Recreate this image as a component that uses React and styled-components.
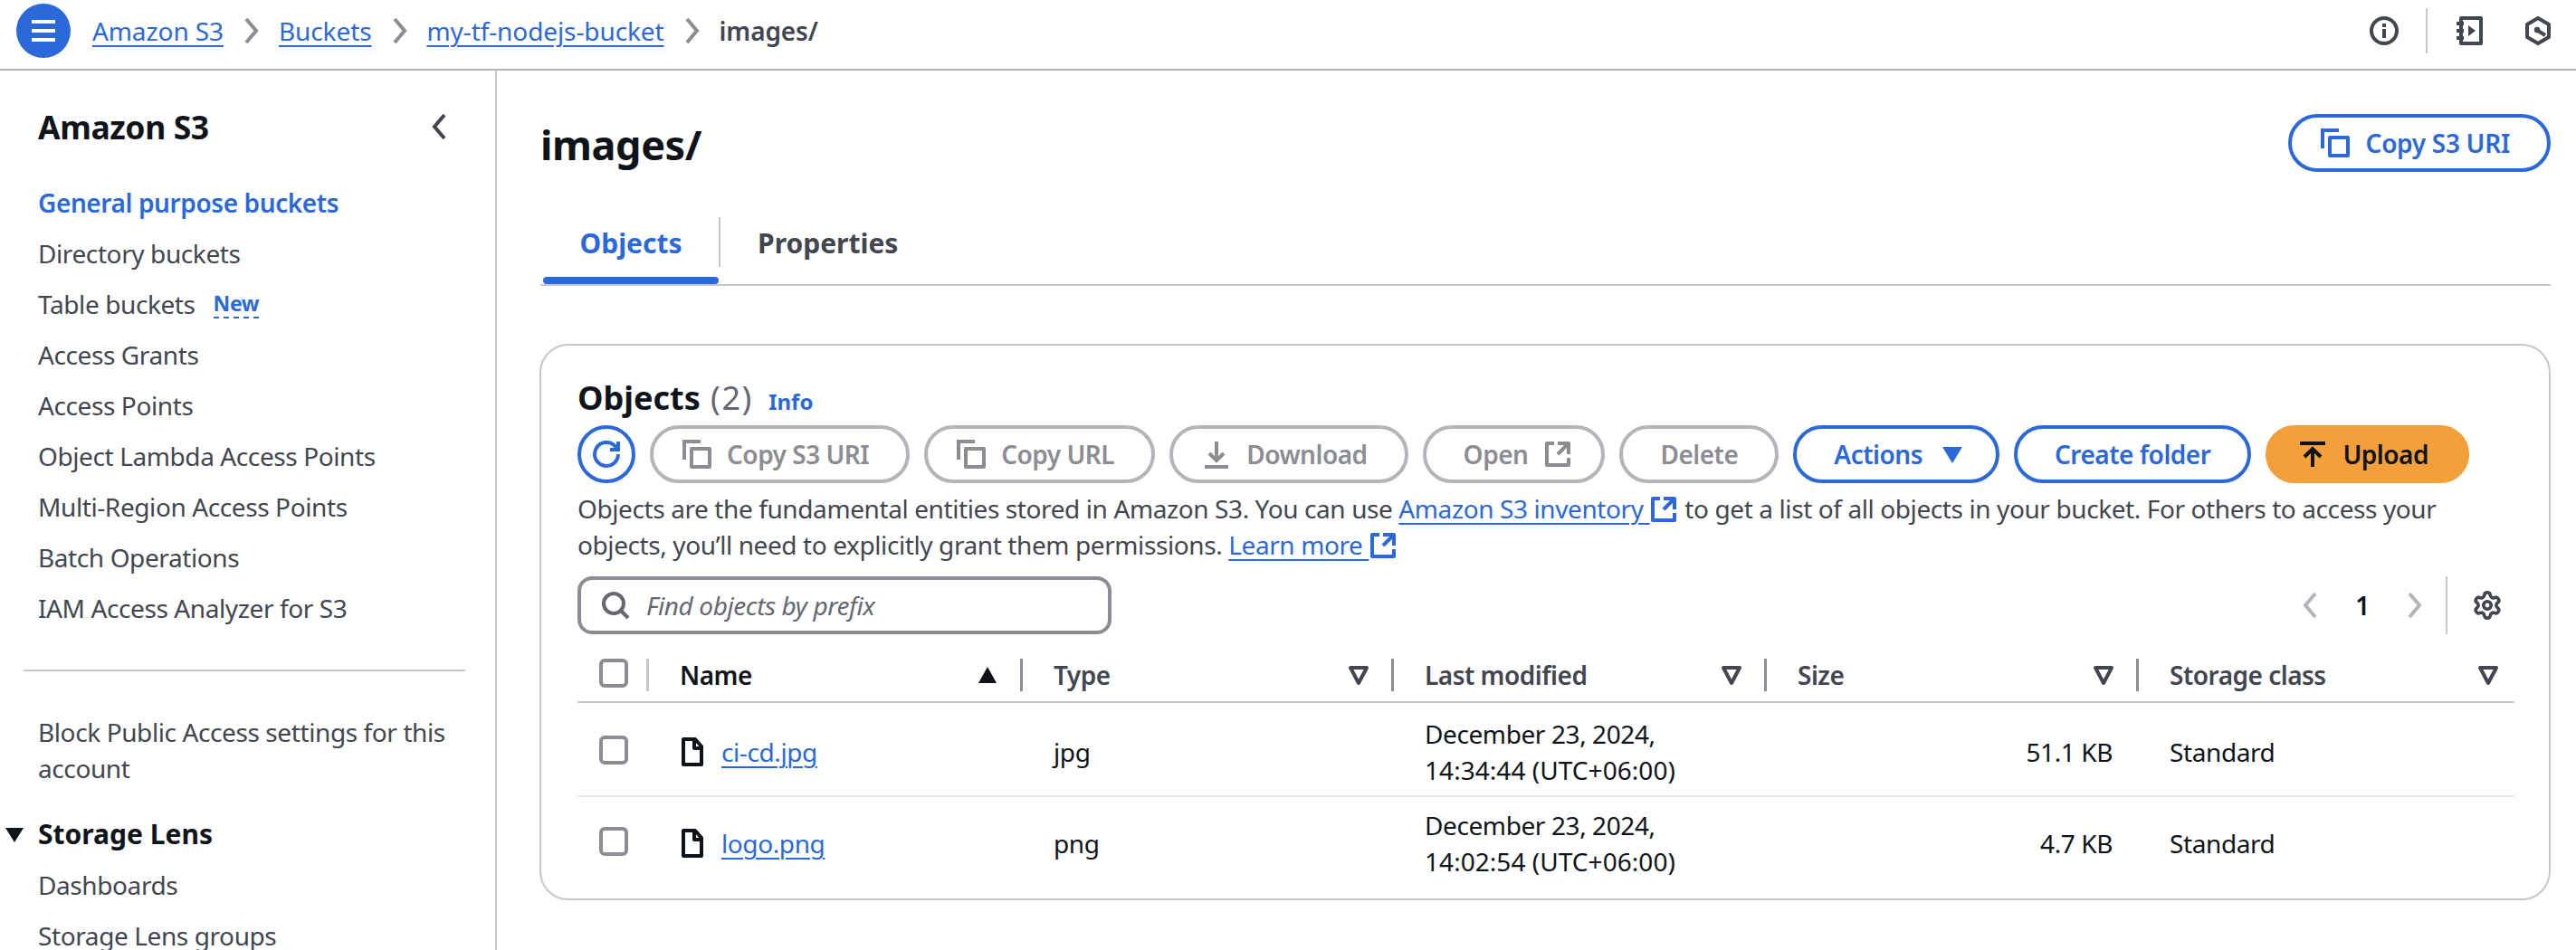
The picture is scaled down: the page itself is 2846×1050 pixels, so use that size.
import styled, { createGlobalStyle } from "styled-components";
import { Settings } from "lucide-react";

const BLUE = "#2b68d9";
const INK = "#0f141a";
const GREY = "#424650";
const LINE = "#c6c6cd";
const MUTED = "#8c8c94";

const navItems = [
  "Directory buckets",
  "Table buckets",
  "Access Grants",
  "Access Points",
  "Object Lambda Access Points",
  "Multi-Region Access Points",
  "Batch Operations",
  "IAM Access Analyzer for S3",
];

const columns = [
  { label: "Name", sorted: true },
  { label: "Type" },
  { label: "Last modified" },
  { label: "Size" },
  { label: "Storage class" },
];

const objects = [
  { name: "ci-cd.jpg", type: "jpg", day: "December 23, 2024,", time: "14:34:44 (UTC+06:00)", size: "51.1 KB" },
  { name: "logo.png", type: "png", day: "December 23, 2024,", time: "14:02:54 (UTC+06:00)", size: "4.7 KB" },
];

function Icon({ size = 32, fill = "none", stroke = "currentColor", width = 2, children }) {
  return (
    <svg width={size} height={size} viewBox="0 0 16 16" fill={fill} stroke={stroke} strokeWidth={width} style={{ flexShrink: 0 }}>
      {children}
    </svg>
  );
}

const CopyIcon = () => (
  <Icon>
    <path d="M1 11V1h9" />
    <path d="M5 5h10v10H5z" strokeLinejoin="round" />
  </Icon>
);

const ExternalIcon = ({ size = 32 }) => (
  <Icon size={size}>
    <path d="M14 8V2H8M14 2 8 8M6 2H2v12h12v-4" strokeLinejoin="round" />
  </Icon>
);

const Chevron = ({ left, size = 32 }) => (
  <Icon size={size}>
    <path d={left ? "M10.5 1.5 5 8l5.5 6.5" : "M5.5 1.5 11 8l-5.5 6.5"} />
  </Icon>
);

const FilterIcon = () => (
  <Icon>
    <path d="M3.5 4h9L8 12.5z" strokeLinejoin="round" />
  </Icon>
);

export default function App() {
  return (
    <Page>
      <GlobalStyle />
      <TopBar>
        <MenuButton>
          <Icon width={2}>
            <path d="M1.5 3h13M1.5 8h13M1.5 13h13" stroke="#fff" />
          </Icon>
        </MenuButton>
        <Crumbs>
          <CrumbLink>Amazon S3</CrumbLink>
          <CrumbSep><Chevron /></CrumbSep>
          <CrumbLink>Buckets</CrumbLink>
          <CrumbSep><Chevron /></CrumbSep>
          <CrumbLink>my-tf-nodejs-bucket</CrumbLink>
          <CrumbSep><Chevron /></CrumbSep>
          <CrumbCurrent>images/</CrumbCurrent>
        </Crumbs>
        <TopTools>
          <Icon>
            <circle cx="8" cy="8" r="7" />
            <path d="M8 7v5M8 4v2" />
          </Icon>
          <ToolDivider />
          <Icon>
            <path d="M3.5 1h11v14h-11z" strokeLinejoin="round" />
            <path d="M1 4h4M1 8h4M1 12h4" />
            <path d="M7.5 5v6l4-3z" fill={GREY} stroke="none" />
          </Icon>
          <HexTool>
            <Icon>
              <path d="M8 1l6 3.5v7L8 15l-6-3.5v-7z" strokeLinejoin="round" />
              <path d="M8 8l4 2.5" />
              <circle cx="7.5" cy="7.5" r="1.6" fill={GREY} stroke="none" />
            </Icon>
          </HexTool>
        </TopTools>
      </TopBar>
      <Body>
        <SideNav>
          <SideHead>
            <SideTitle>Amazon S3</SideTitle>
            <Chevron left />
          </SideHead>
          <NavList>
            <NavItem $active>General purpose buckets</NavItem>
            {navItems.map((item) => (
              <NavItem key={item}>
                {item}
                {item === "Table buckets" && <NewTag>New</NewTag>}
              </NavItem>
            ))}
          </NavList>
          <NavDivider />
          <NavBlock>Block Public Access settings for this account</NavBlock>
          <NavGroup>
            <GroupCaret />
            Storage Lens
          </NavGroup>
          <NavItem>Dashboards</NavItem>
          <NavItem>Storage Lens groups</NavItem>
        </SideNav>
        <Main>
          <TitleRow>
            <Title>images/</Title>
            <PageCopyButton $variant="normal" $iconLeft><CopyIcon />Copy S3 URI</PageCopyButton>
          </TitleRow>
          <Tabs>
            <Tab $active>
              <TabLabel $active>Objects</TabLabel>
              <TabBar />
            </Tab>
            <TabSep />
            <Tab>
              <TabLabel>Properties</TabLabel>
            </Tab>
          </Tabs>
          <Card>
            <CardTitle>
              Objects <Count>(2)</Count> <InfoLink>Info</InfoLink>
            </CardTitle>
            <Actions>
              <RoundButton>
                <Icon>
                  <path d="M14.5 8A6.5 6.5 0 1 1 12.6 3.4L14.5 5" />
                  <path d="M14.5 1v4.5H10" />
                </Icon>
              </RoundButton>
              <Button $variant="disabled" $iconLeft><CopyIcon />Copy S3 URI</Button>
              <Button $variant="disabled" $iconLeft><CopyIcon />Copy URL</Button>
              <Button $variant="disabled" $iconLeft>
                <Icon><path d="M1.5 15h13M8 1v10M12 7.5 8 11.5 4 7.5" /></Icon>
                Download
              </Button>
              <Button $variant="disabled" $iconRight>Open<ExternalIcon /></Button>
              <Button $variant="disabled">Delete</Button>
              <Button $variant="normal" $iconRight>
                Actions
                <Icon fill={BLUE} stroke="none"><path d="M2.5 4h11L8 13z" /></Icon>
              </Button>
              <Button $variant="normal">Create folder</Button>
              <Button $variant="primary" $iconLeft>
                <Icon><path d="M1 2h14M8 15V5M12.5 9.5 8 5 3.5 9.5" /></Icon>
                Upload
              </Button>
            </Actions>
            <Description>
              Objects are the fundamental entities stored in Amazon S3. You can use{" "}
              <DocLink>Amazon S3 inventory <ExternalIcon /></DocLink> to get a list of all objects in your bucket. For others to access your
              <br />
              objects, you’ll need to explicitly grant them permissions.{" "}
              <DocLink>Learn more <ExternalIcon /></DocLink>
            </Description>
            <FilterRow>
              <SearchBox>
                <Icon stroke="#656871">
                  <circle cx="7" cy="7" r="5.5" />
                  <path d="M11 11l4 4" />
                </Icon>
                <SearchHint>Find objects by prefix</SearchHint>
              </SearchBox>
              <Pager>
                <PagerArrow><Chevron left /></PagerArrow>
                <PageNumber>1</PageNumber>
                <PagerArrow><Chevron /></PagerArrow>
                <PagerDivider />
                <Settings size={34} color={GREY} strokeWidth={2.6} />
              </Pager>
            </FilterRow>
            <HeadRow>
              <CheckCell $divided><Check /></CheckCell>
              {columns.map((col, i) => (
                <HeadCell key={col.label} $sorted={col.sorted} $last={i === columns.length - 1}>
                  {col.label}
                  {col.sorted ? (
                    <Icon fill={INK} stroke="none"><path d="M8 3.5l5 9H3z" /></Icon>
                  ) : (
                    <FilterIcon />
                  )}
                </HeadCell>
              ))}
            </HeadRow>
            {objects.map((obj) => (
              <Row key={obj.name}>
                <CheckCell><Check /></CheckCell>
                <NameCell>
                  <svg width="24" height="32" viewBox="0 0 12 16" fill="none" stroke={INK} strokeWidth="2" strokeLinejoin="round">
                    <path d="M1 1h6.5L11 5v10H1z" />
                    <path d="M7 1v5h4" />
                  </svg>
                  <FileLink>{obj.name}</FileLink>
                </NameCell>
                <Cell>{obj.type}</Cell>
                <Cell>{obj.day}<br /><TimeText>{obj.time}</TimeText></Cell>
                <SizeCell>{obj.size}</SizeCell>
                <Cell>Standard</Cell>
              </Row>
            ))}
          </Card>
        </Main>
      </Body>
    </Page>
  );
}

const GlobalStyle = createGlobalStyle`
  html, body {
    margin: 0;
    background: #fff;
  }
  * {
    box-sizing: border-box;
  }
  body {
    font-family: "Noto Sans", "Open Sans", sans-serif;
    font-size: 28px;
    line-height: 40px;
    letter-spacing: -0.4px;
    color: ${INK};
  }
`

const Page = styled.div`
  width: 2846px;
  height: 1050px;
  overflow: hidden;
  display: flex;
  flex-direction: column;
`

const TopBar = styled.header`
  height: 78px;
  flex-shrink: 0;
  display: flex;
  align-items: center;
  padding: 0 26px 8px 18px;
  border-bottom: 2px solid #b4b4bb;
`

const MenuButton = styled.div`
  width: 60px;
  height: 60px;
  border-radius: 50%;
  background: ${BLUE};
  display: flex;
  align-items: center;
  justify-content: center;
`

const Crumbs = styled.nav`
  display: flex;
  align-items: center;
  margin-left: 24px;
  flex: 1;
  letter-spacing: -0.1px;
`

const CrumbLink = styled.a`
  color: ${BLUE};
  text-decoration: underline;
  text-underline-offset: 5px;
  text-decoration-thickness: 2px;
`

const CrumbSep = styled.span`
  display: flex;
  width: 61px;
  justify-content: center;
  color: #8c8c94;
`

const CrumbCurrent = styled.span`
  color: ${GREY};
  font-weight: 600;
`

const TopTools = styled.div`
  display: flex;
  align-items: center;
  color: ${GREY};
  gap: 30px;
`

const ToolDivider = styled.div`
  width: 2px;
  height: 50px;
  background: ${LINE};
`

const HexTool = styled.span`
  display: flex;
  margin-left: 14px;
`

const Body = styled.div`
  flex: 1;
  display: flex;
`

const SideNav = styled.aside`
  width: 549px;
  flex-shrink: 0;
  padding: 40px 0 0 42px;
  border-right: 2px solid ${LINE};
  color: ${GREY};
`

const SideHead = styled.div`
  display: flex;
  align-items: center;
  justify-content: space-between;
  padding-right: 45px;
  color: ${GREY};
`

const SideTitle = styled.h2`
  margin: 0;
  font-size: 35.5px;
  line-height: 44px;
  font-weight: 700;
  color: ${INK};
`

const NavList = styled.div`
  margin-top: 34px;
`

const NavItem = styled.div`
  height: 56px;
  display: flex;
  align-items: center;
  color: ${(p) => (p.$active ? BLUE : GREY)};
  font-weight: ${(p) => (p.$active ? 600 : 400)};
`

const NewTag = styled.span`
  margin-left: 20px;
  font-size: 23px;
  line-height: 30px;
  font-weight: 700;
  color: ${BLUE};
  border-bottom: 2px dashed ${BLUE};
`

const NavDivider = styled.div`
  width: 488px;
  height: 2px;
  margin: 40px 0 47px -16px;
  background: ${LINE};
`

const NavBlock = styled.div`
  width: 480px;
`

const NavGroup = styled.div`
  position: relative;
  height: 56px;
  margin-top: 25px;
  display: flex;
  align-items: center;
  font-size: 30px;
  font-weight: 700;
  letter-spacing: 0;
  color: ${INK};
`

const GroupCaret = styled.span`
  position: absolute;
  left: -36px;
  top: 21px;
  border-left: 10px solid transparent;
  border-right: 10px solid transparent;
  border-top: 16px solid ${INK};
`

const Main = styled.main`
  flex: 1;
  min-width: 0;
  padding: 48px 28px 0 48px;
`

const TitleRow = styled.div`
  display: flex;
  align-items: center;
  justify-content: space-between;
`

const Title = styled.h1`
  margin: 4px 0 0;
  font-size: 45px;
  line-height: 56px;
  font-weight: 700;
`

const Button = styled.button`
  height: 64px;
  padding: 0 ${(p) => (p.$iconRight ? 32 : 41)}px 0 ${(p) => (p.$iconLeft ? 32 : 41)}px;
  display: inline-flex;
  align-items: center;
  gap: 17px;
  border-radius: 32px;
  font: inherit;
  font-weight: 600;
  letter-spacing: -0.5px;
  white-space: nowrap;
  border: 4px solid ${(p) => (p.$variant === "disabled" ? "#b4b4bb" : p.$variant === "primary" ? "#f3a03a" : BLUE)};
  background: ${(p) => (p.$variant === "primary" ? "#f3a03a" : "#fff")};
  color: ${(p) => (p.$variant === "disabled" ? MUTED : p.$variant === "primary" ? INK : BLUE)};
`

const PageCopyButton = styled(Button)`
  padding-left: 32px;
  letter-spacing: -0.3px;
  gap: 18px;
`

const RoundButton = styled.button`
  width: 64px;
  height: 64px;
  padding: 0;
  display: flex;
  align-items: center;
  justify-content: center;
  border-radius: 50%;
  border: 4px solid ${BLUE};
  background: #fff;
  color: ${BLUE};
`

const Tabs = styled.div`
  display: flex;
  height: 76px;
  margin-top: 50px;
  padding-left: 3px;
  border-bottom: 2px solid ${LINE};
`

const Tab = styled.div`
  display: flex;
  flex-direction: column;
  justify-content: space-between;
  padding-top: 9px;
  width: ${(p) => (p.$active ? "194px" : "auto")};
  padding-left: ${(p) => (p.$active ? "0" : "41px")};
`

const TabLabel = styled.span`
  font-size: 30px;
  font-weight: 700;
  letter-spacing: 0;
  text-align: center;
  color: ${(p) => (p.$active ? BLUE : GREY)};
`

const TabBar = styled.div`
  height: 8px;
  border-radius: 4px;
  background: ${BLUE};
`

const TabSep = styled.div`
  width: 2px;
  height: 55px;
  background: ${LINE};
`

const Card = styled.section`
  margin: 64px 0 0 -1px;
  padding: 36px 38px 9px 40px;
  height: 615px;
  border: 2px solid ${LINE};
  border-radius: 32px;
`

const CardTitle = styled.h2`
  margin: 0;
  font-size: 36px;
  line-height: 44px;
  font-weight: 700;
  letter-spacing: 0;
`

const Count = styled.span`
  margin-left: 2px;
  font-weight: 400;
  letter-spacing: 1.5px;
  color: #656871;
`

const InfoLink = styled.a`
  margin-left: 8px;
  font-size: 24px;
  line-height: 1;
  color: ${BLUE};
`

const Actions = styled.div`
  display: flex;
  gap: 16px;
  margin-top: 8px;
`

const Description = styled.p`
  margin: 8px 0 0;
  color: ${GREY};
  white-space: nowrap;
`

const DocLink = styled.a`
  color: ${BLUE};
  text-decoration: underline;
  text-underline-offset: 5px;
  text-decoration-thickness: 2px;
  svg {
    vertical-align: -6px;
  }
`

const FilterRow = styled.div`
  display: flex;
  align-items: center;
  justify-content: space-between;
  margin-top: 15px;
`

const SearchBox = styled.div`
  width: 590px;
  height: 64px;
  padding: 0 22px;
  display: flex;
  align-items: center;
  gap: 18px;
  border: 4px solid ${MUTED};
  border-radius: 16px;
`

const SearchHint = styled.span`
  font-style: italic;
  color: #656871;
`

const Pager = styled.div`
  display: flex;
  align-items: center;
  margin-right: 13px;
`

const PagerArrow = styled.span`
  display: flex;
  color: #b4b4bb;
`

const PageNumber = styled.span`
  width: 82px;
  text-align: center;
  font-weight: 600;
`

const PagerDivider = styled.div`
  width: 2px;
  height: 64px;
  margin: 0 27px 0 19px;
  background: ${LINE};
`

const tableColumns = "79px 413px 410px 412px 411px 1fr";

const HeadRow = styled.div`
  display: grid;
  grid-template-columns: ${tableColumns};
  height: 60px;
  margin-top: 16px;
  align-items: center;
  border-bottom: 2px solid ${LINE};
`

const Row = styled.div`
  display: grid;
  grid-template-columns: ${tableColumns};
  height: 102px;
  padding-top: 6px;
  align-items: center;
  & + & {
    height: 104px;
    padding-top: 0;
    border-top: 2px solid #e9e9ed;
  }
`

const Check = styled.span`
  display: block;
  width: 32px;
  height: 32px;
  border: 4px solid ${MUTED};
  border-radius: 6px;
`

const CheckCell = styled.div`
  height: 36px;
  padding: 0 0 0 24px;
  ${(p) => (p.$divided ? `border-right: 3px solid ${LINE};` : "")}
`

const HeadCell = styled.div`
  height: 36px;
  display: flex;
  align-items: center;
  justify-content: space-between;
  padding: 0 ${(p) => (p.$last ? 13 : 20)}px 0 34px;
  font-weight: 600;
  letter-spacing: -0.5px;
  color: ${(p) => (p.$sorted ? INK : GREY)};
  ${(p) => (p.$last ? "" : `border-right: 3px solid ${MUTED};`)}
`

const Cell = styled.div`
  padding-left: 34px;
`

const TimeText = styled.span`
  letter-spacing: 0.05px;
`

const NameCell = styled.div`
  display: flex;
  align-items: center;
  gap: 20px;
  padding-left: 36px;
`

const FileLink = styled.a`
  color: ${BLUE};
  text-decoration: underline;
  text-underline-offset: 5px;
  text-decoration-thickness: 2px;
`

const SizeCell = styled.div`
  text-align: right;
  padding-right: 29px;
`
